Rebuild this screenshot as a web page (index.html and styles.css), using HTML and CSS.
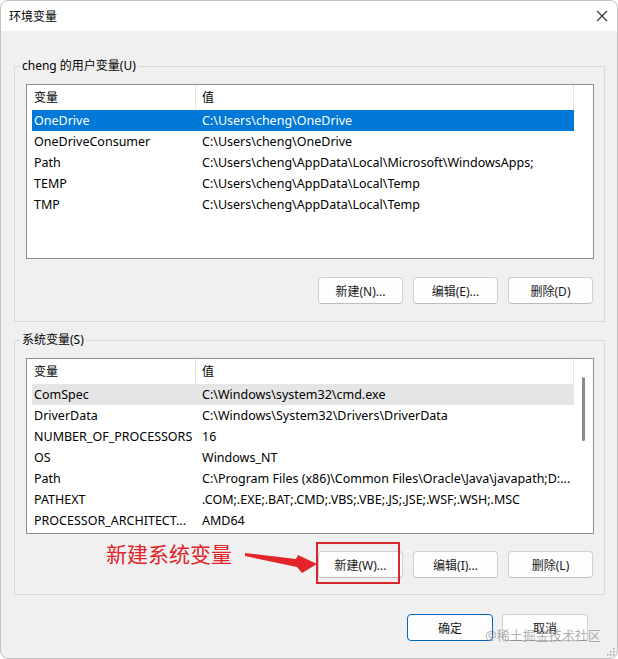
FILE: index.html
```html
<!DOCTYPE html>
<html lang="zh-CN">
<head>
<meta charset="utf-8">
<title>环境变量</title>
<link rel="stylesheet" href="styles.css">
</head>
<body>
<div class="window">
  <div class="titlebar">
    <span class="title">环境变量</span>
    <svg class="close" width="12" height="12" viewBox="0 0 12 12"><path d="M1 1L11 11M11 1L1 11" stroke="#333" stroke-width="1.1" fill="none"/></svg>
  </div>
  <div class="content">
    <div class="group group-user">
      <div class="legend">cheng 的用户变量(U)</div>
      <div class="list list-user">
        <div class="list-main">
          <div class="list-head"><div class="hcell c1">变量</div><div class="hcell c2">值</div></div>
          <div class="row selected"><div class="cell c1">OneDrive</div><div class="cell c2">C:\Users\cheng\OneDrive</div></div>
          <div class="row"><div class="cell c1">OneDriveConsumer</div><div class="cell c2">C:\Users\cheng\OneDrive</div></div>
          <div class="row"><div class="cell c1">Path</div><div class="cell c2">C:\Users\cheng\AppData\Local\Microsoft\WindowsApps;</div></div>
          <div class="row"><div class="cell c1">TEMP</div><div class="cell c2">C:\Users\cheng\AppData\Local\Temp</div></div>
          <div class="row"><div class="cell c1">TMP</div><div class="cell c2">C:\Users\cheng\AppData\Local\Temp</div></div>
        </div>
        <div class="scroll"></div>
      </div>
      <div class="btn-row">
        <button class="btn">新建(N)...</button>
        <button class="btn">编辑(E)...</button>
        <button class="btn">删除(D)</button>
      </div>
    </div>
    <div class="group group-sys">
      <div class="legend">系统变量(S)</div>
      <div class="list list-sys">
        <div class="list-main">
          <div class="list-head"><div class="hcell c1">变量</div><div class="hcell c2">值</div></div>
          <div class="row hover"><div class="cell c1">ComSpec</div><div class="cell c2">C:\Windows\system32\cmd.exe</div></div>
          <div class="row"><div class="cell c1">DriverData</div><div class="cell c2">C:\Windows\System32\Drivers\DriverData</div></div>
          <div class="row"><div class="cell c1">NUMBER_OF_PROCESSORS</div><div class="cell c2">16</div></div>
          <div class="row"><div class="cell c1">OS</div><div class="cell c2">Windows_NT</div></div>
          <div class="row"><div class="cell c1">Path</div><div class="cell c2">C:\Program Files (x86)\Common Files\Oracle\Java\javapath;D:...</div></div>
          <div class="row"><div class="cell c1">PATHEXT</div><div class="cell c2">.COM;.EXE;.BAT;.CMD;.VBS;.VBE;.JS;.JSE;.WSF;.WSH;.MSC</div></div>
          <div class="row"><div class="cell c1">PROCESSOR_ARCHITECT...</div><div class="cell c2">AMD64</div></div>
        </div>
        <div class="scroll"><div class="thumb"></div></div>
      </div>
      <div class="btn-row btn-row-sys">
        <button class="btn">新建(W)...</button>
        <button class="btn">编辑(I)...</button>
        <button class="btn">删除(L)</button>
      </div>
    </div>
    <div class="dialog-row">
      <button class="btn primary">确定</button>
      <button class="btn">取消</button>
    </div>
  </div>

  <div class="note">新建系统变量</div>
  <svg class="arrow" width="85" height="40" viewBox="0 0 85 40"><polygon points="5,8 56,14 58,10 77,19 62,28 57,22 5,11" fill="#e3242b"/></svg>
  <div class="highlight"></div>
  <div class="watermark">@稀土掘金技术社区</div>
  <svg class="grip" width="8" height="8" viewBox="0 0 8 8"><g fill="#a0a0a0"><rect x="6" y="0" width="1.5" height="1.5"/><rect x="3" y="3" width="1.5" height="1.5"/><rect x="6" y="3" width="1.5" height="1.5"/><rect x="0" y="6" width="1.5" height="1.5"/><rect x="3" y="6" width="1.5" height="1.5"/><rect x="6" y="6" width="1.5" height="1.5"/></g></svg>
</div>
</body>
</html>
```
FILE: styles.css
```css
* { box-sizing: border-box; }
html, body { margin: 0; padding: 0; background: #ffffff; }
body {
  font-family: "Noto Sans", "Noto Sans CJK SC", sans-serif;
  font-size: 12px;
  color: #000;
}
.window {
  position: relative;
  width: 618px;
  height: 659px;
  border: 1px solid #c2c2c2;
  border-radius: 8px;
  overflow: hidden;
  background: #f0f0f0;
}
.titlebar {
  height: 30px;
  background: #ffffff;
  display: flex;
  align-items: center;
  justify-content: space-between;
  padding: 0 9px 0 8px;
}
.title { font-size: 12px; color: #000; }
.close { display: block; }
.content {
  padding: 0 12px 0 13px;
}
.group {
  border: 1px solid #d9d9d9;
  padding: 0 10px 17px 11px;
}
.group-user { margin-top: 35px; }
.group-sys { margin-top: 18px; padding-bottom: 16px; }
.legend {
  width: fit-content;
  margin: -9px 0 0 -6px;
  padding: 0 2px;
  line-height: 16px;
  background: #f0f0f0;
}
.list {
  margin-top: 10px;
  display: flex;
  border: 1px solid #8f8f8f;
  background: #ffffff;
}
.list-user { height: 175px; }
.list-sys { height: 176px; }
.list-main {
  width: 547px;
  padding-left: 5px;
}
.scroll { flex: 1; }
.thumb {
  width: 3px;
  height: 64px;
  margin: 18px auto 0;
  border-radius: 2px;
  background: #8a8a8a;
}
.list-head {
  display: flex;
  height: 25px;
  line-height: 25px;
}
.hcell { padding-left: 2px; border-right: 1px solid #e5e5e5; }
.hcell.c1 { width: 164px; }
.hcell.c2 { flex: 1; padding-left: 6px; }
.row {
  display: flex;
  height: 21px;
  line-height: 21px;
  font-size: 12.5px;
  white-space: nowrap;
}
.row.selected { background: #0078d7; color: #ffffff; }
.row.hover { background: #e5e5e5; }
.cell { padding-left: 2px; overflow: hidden; }
.cell.c1 { width: 168px; }
.cell.c2 { flex: 1; }
.btn-row {
  display: flex;
  justify-content: flex-end;
  gap: 10px;
  margin-top: 18px;
  padding-right: 1px;
}
.btn-row-sys { margin-top: 17px; }
.btn {
  width: 85px;
  height: 27px;
  margin: 0;
  padding: 0;
  border: 1px solid #d0d0d0;
  border-bottom-color: #bdbdbd;
  border-radius: 4px;
  background: #fdfdfd;
  font-family: inherit;
  font-size: 12px;
  color: #1a1a1a;
}
.btn.primary { border-color: #0067c0; }
.dialog-row {
  display: flex;
  justify-content: flex-end;
  gap: 9px;
  margin-top: 19px;
  padding-right: 17px;
}
.dialog-row .btn { width: 86px; }
.note {
  position: absolute;
  left: 105px;
  top: 542px;
  font-size: 21px;
  line-height: 22px;
  color: #e3242b;
}
.arrow { position: absolute; left: 239px; top: 544px; }
.highlight {
  position: absolute;
  left: 315px;
  top: 541px;
  width: 84px;
  height: 42px;
  border: 2px solid #d8262e;
}
.watermark {
  position: absolute;
  left: 484px;
  top: 625px;
  font-size: 13px;
  line-height: 18px;
  color: rgba(110, 110, 110, 0.55);
}
.grip { position: absolute; right: 2px; bottom: 2px; }
```
